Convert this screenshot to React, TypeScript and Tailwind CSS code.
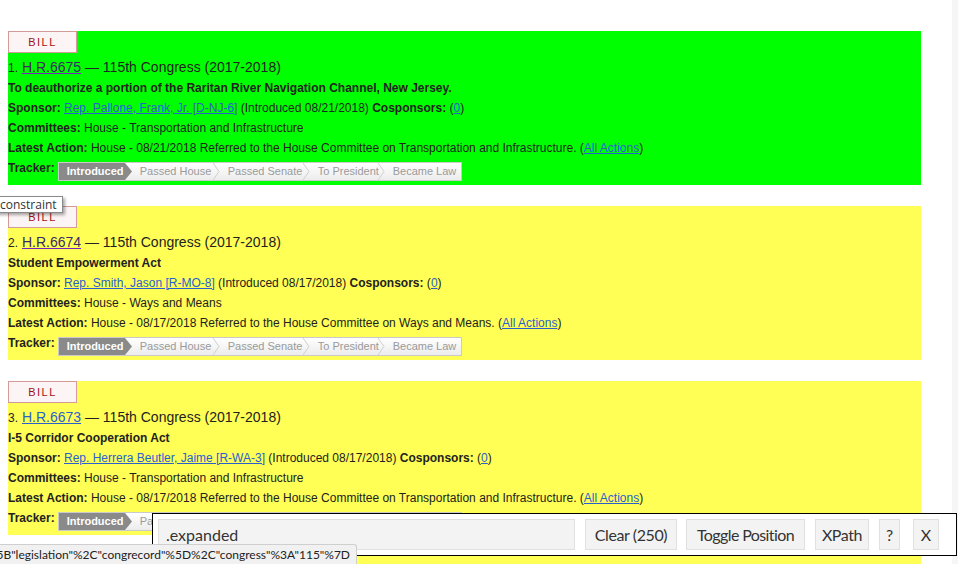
type Bill = {
  n: number;
  num: string;
  visited: boolean;
  title: string;
  sponsor: string;
  introduced: string;
  committees: string;
  action: string;
  bg: string;
};

const bills: Bill[] = [
  {
    n: 1,
    num: "H.R.6675",
    visited: true,
    title: "To deauthorize a portion of the Raritan River Navigation Channel, New Jersey.",
    sponsor: "Rep. Pallone, Frank, Jr. [D-NJ-6]",
    introduced: "08/21/2018",
    committees: "House - Transportation and Infrastructure",
    action: "House - 08/21/2018 Referred to the House Committee on Transportation and Infrastructure.",
    bg: "bg-[#00ff00]",
  },
  {
    n: 2,
    num: "H.R.6674",
    visited: true,
    title: "Student Empowerment Act",
    sponsor: "Rep. Smith, Jason [R-MO-8]",
    introduced: "08/17/2018",
    committees: "House - Ways and Means",
    action: "House - 08/17/2018 Referred to the House Committee on Ways and Means.",
    bg: "bg-[#ffff55]",
  },
  {
    n: 3,
    num: "H.R.6673",
    visited: false,
    title: "I-5 Corridor Cooperation Act",
    sponsor: "Rep. Herrera Beutler, Jaime [R-WA-3]",
    introduced: "08/17/2018",
    committees: "House - Transportation and Infrastructure",
    action: "House - 08/17/2018 Referred to the House Committee on Transportation and Infrastructure.",
    bg: "bg-[#ffff55]",
  },
  {
    n: 4,
    num: "H.R.6672",
    visited: false,
    title: "To amend title 38, United States Code.",
    sponsor: "Rep. Smith, Jason [R-MO-8]",
    introduced: "08/17/2018",
    committees: "House - Ways and Means",
    action: "House - 08/17/2018 Referred to the House Committee on Ways and Means.",
    bg: "bg-[#ffff55]",
  },
];

const link = "text-[#2a5fd0] underline";

function Chevron() {
  return (
    <svg className="absolute right-0 top-0" width="7" height="17" viewBox="0 0 7 17">
      <polyline points="0,0 6,8.5 0,17" fill="none" stroke="#cfcfcf" strokeWidth="1" />
    </svg>
  );
}

function Tracker() {
  const steps = [
    { label: "Passed House", w: "w-[95px]" },
    { label: "Passed Senate", w: "w-[90px]" },
    { label: "To President", w: "w-[75px]" },
    { label: "Became Law", w: "w-[76px]" },
  ];
  return (
    <div className="flex h-[19px] border border-[#cacaca] bg-gradient-to-b from-white to-[#ececec] text-[11px] leading-[17px]">
      <div className="relative w-[66px] bg-[#8a8a8a] pl-[8px] font-bold text-white">
        Introduced
        <svg className="absolute left-full top-0" width="7" height="17" viewBox="0 0 7 17">
          <polygon points="0,0 7,8.5 0,17" fill="#8a8a8a" />
        </svg>
      </div>
      {steps.map((s, i) => (
        <div key={s.label} className={`relative ${s.w} ${i === 0 ? "pl-[15px]" : "pl-[8px]"} text-[#9a9a9a]`}>
          {s.label}
          {i < steps.length - 1 && <Chevron />}
        </div>
      ))}
    </div>
  );
}

function BillCard({ b }: { b: Bill }) {
  return (
    <div className={`${b.bg} h-[154px] w-[913px] text-[12px] leading-[20px] text-[#222]`}>
      <div className="flex h-[22px] w-[69px] items-center justify-center border border-[#d49a9a] bg-[#fdf5f5] text-[11px] tracking-[1.5px] text-[#a01010]">
        BILL
      </div>
      <div className="mt-[4px] text-[14px]">
        <span className="text-[12px]">{b.n}.</span>{" "}
        <span
          className={
            b.visited
              ? "text-[#3a2a68] underline decoration-[#7a22c0]"
              : "text-[#2a5fd0] underline"
          }
        >
          {b.num}
        </span>{" "}
        — 115th Congress (2017-2018)
      </div>
      <div className="font-bold">{b.title}</div>
      <div>
        <b>Sponsor:</b> <span className={link}>{b.sponsor}</span> (Introduced {b.introduced}){" "}
        <b>Cosponsors:</b> (<span className={link}>0</span>)
      </div>
      <div>
        <b>Committees:</b> {b.committees}
      </div>
      <div>
        <b>Latest Action:</b> {b.action} (<span className={link}>All Actions</span>)
      </div>
      <div className="flex items-start gap-[3px] pt-[1px]">
        <b className="leading-[18px]">Tracker:</b>
        <div className="pt-[3px]">
          <Tracker />
        </div>
      </div>
    </div>
  );
}

const btn = "flex h-[31px] items-center justify-center border border-[#e0e0e0] bg-[#f3f3f3]";

export default function App() {
  return (
    <div
      className="relative h-[564px] w-[958px] overflow-hidden bg-white"
      style={{ fontFamily: '"Liberation Sans", Arial, sans-serif' }}
    >
      <div className="absolute right-0 top-0 h-full w-[6px] bg-[#f6f6f6]" />
      <div className="flex flex-col gap-[21px] pl-[8px] pt-[31px]">
        {bills.map((b) => (
          <BillCard key={b.n} b={b} />
        ))}
      </div>

      <div className="absolute left-[-6px] top-[196px] border border-[#8a8a8a] bg-white px-[5px] text-[12px] leading-[15px] text-[#333] shadow-[2px_2px_3px_rgba(0,0,0,0.35)] [font-family:'Open_Sans',sans-serif]">
        constraint
      </div>

      <div className="absolute left-[152px] top-[513px] flex h-[43px] w-[805px] items-center border border-black bg-white pl-[5px] text-[16px] text-[#333] [font-family:Lato,sans-serif]">
        <div className="flex h-[31px] w-[417px] items-center border border-[#e0e0e0] bg-[#f3f3f3] pl-[7px]">
          .expanded
        </div>
        <div className={`${btn} ml-[10px] w-[92px] tracking-[-0.4px]`}>Clear (250)</div>
        <div className={`${btn} ml-[9px] w-[119px] tracking-[-0.6px]`}>Toggle Position</div>
        <div className={`${btn} ml-[10px] w-[54px] tracking-[-0.4px]`}>XPath</div>
        <div className={`${btn} ml-[10px] w-[21px]`}>?</div>
        <div className={`${btn} ml-[13px] w-[26px]`}>X</div>
      </div>

      <div className="absolute bottom-0 left-0 flex h-[20px] w-[357px] items-center justify-end overflow-hidden whitespace-nowrap rounded-tr-[3px] border-r border-t border-[#cfcfcf] bg-[#f1f1f1] pr-[6px] text-[12px] text-[#222] [font-family:Lato,sans-serif]">
        %22%3A%5B"legislation"%2C"congrecord"%5D%2C"congress"%3A"115"%7D
      </div>
    </div>
  );
}
